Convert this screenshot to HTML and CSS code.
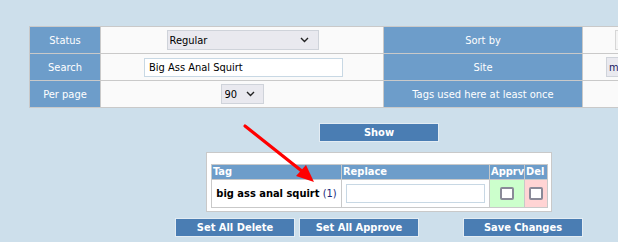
FILE: index.html
```html
<!DOCTYPE html>
<html>
<head>
<meta charset="utf-8">
<link rel="stylesheet" href="styles.css">
</head>
<body>
<div class="page">
  <table class="filters">
    <colgroup><col class="c1"><col class="c2"><col class="c3"><col class="c4"></colgroup>
    <tr>
      <th>Status</th>
      <td class="center"><div class="sel sel-status"><select><option>Regular</option></select><svg class="chev" width="9" height="6" viewBox="0 0 9 6"><path d="M1 1l3.5 3.5L8 1" fill="none" stroke="#222" stroke-width="1.4"/></svg></div></td>
      <th>Sort by</th>
      <td><div class="sel sel-sort"><select><option></option></select></div></td>
    </tr>
    <tr>
      <th>Search</th>
      <td class="center"><input class="search" type="text" value="Big Ass Anal Squirt"></td>
      <th>Site</th>
      <td><div class="sel sel-site"><select><option>m</option></select></div></td>
    </tr>
    <tr>
      <th>Per page</th>
      <td class="center"><div class="sel sel-pp"><select><option>90</option></select><svg class="chev" width="9" height="6" viewBox="0 0 9 6"><path d="M1 1l3.5 3.5L8 1" fill="none" stroke="#222" stroke-width="1.4"/></svg></div></td>
      <th>Tags used here at least once</th>
      <td></td>
    </tr>
  </table>

  <div class="show-row"><button class="btn">Show</button></div>

  <div class="tags-box">
    <table class="tags">
      <colgroup><col class="t1"><col class="t2"><col class="t3"><col class="t4"></colgroup>
      <tr class="head"><th>Tag</th><th>Replace</th><th>Apprv</th><th>Del</th></tr>
      <tr>
        <td class="tagname"><b>big ass anal squirt</b> <span class="count">(1)</span></td>
        <td><input class="replace" type="text"></td>
        <td class="apprv"><span class="cb"></span></td>
        <td class="del"><span class="cb"></span></td>
      </tr>
    </table>
  </div>

  <div class="actions">
    <button class="btn">Set All Delete</button>
    <button class="btn">Set All Approve</button>
    <button class="btn save">Save Changes</button>
  </div>

  <svg class="arrow" width="100" height="80" viewBox="0 0 100 80">
    <line x1="5" y1="6" x2="63" y2="52" stroke="#ff0000" stroke-width="3.2" stroke-linecap="round"/>
    <polygon points="74,62 56,56 66,45" fill="#ff0000"/>
  </svg>
</div>
</body>
</html>
```
FILE: styles.css
```css
html, body {
  margin: 0;
  padding: 0;
  background: #cddfeb;
  overflow: hidden;
}
body {
  font-family: "DejaVu Sans Condensed", "DejaVu Sans", Verdana, sans-serif;
  font-stretch: condensed;
  font-size: 11px;
}
.page {
  position: relative;
  padding: 26px 0 0 29px;
  width: 589px;
  height: 216px;
  overflow: hidden;
}
.filters {
  border-collapse: collapse;
  table-layout: fixed;
  width: 790px;
  border: 1px solid #c9c9c9;
}
.filters col.c1 { width: 71px; }
.filters col.c2 { width: 283px; }
.filters col.c3 { width: 199px; }
.filters col.c4 { width: 237px; }
.filters th, .filters td {
  border: 1px solid #c9c9c9;
  height: 26px;
  padding: 0;
}
.filters th {
  background: #6d9dca;
  color: #fff;
  font-weight: normal;
  text-align: center;
}
.filters td {
  background: #fafafa;
}
.center { text-align: center; }
.sel {
  position: relative;
  display: inline-block;
  vertical-align: middle;
}
.sel select {
  appearance: none;
  -webkit-appearance: none;
  font: inherit;
  color: #000;
  background: #e9e9ef;
  border: 1px solid #cfd3da;
  border-radius: 0;
  height: 20px;
  padding: 0 0 0 2px;
  margin: 0;
  outline: none;
}
.sel .chev {
  position: absolute;
  right: 10px;
  top: 7px;
  pointer-events: none;
}
.sel-status select { width: 152px; }
.sel-status { margin-left: 1px; }
.sel-pp select { width: 43px; padding-left: 3px; }
.sel-pp .chev { right: 9px; }
.sel-sort select { width: 40px; margin-left: 32px; background: #f4f4f4; border-color: #d6d6d6; }
.sel-site select { width: 40px; margin-left: 23px; color: #1a1a60; }
.search {
  font: inherit;
  width: 199px;
  height: 19px;
  box-sizing: border-box;
  border: 1px solid #c8d8e4;
  background: #fff;
  padding: 0 0 0 4px;
  margin: 0 0 0 3px;
  vertical-align: middle;
  outline: none;
}
.btn {
  font-family: inherit;
  font-stretch: condensed;
  font-size: 11px;
  font-weight: bold;
  color: #fff;
  background: #4a7db3;
  border: 1px solid #e3ecf3;
  width: 120px;
  height: 19px;
  padding: 0;
  margin: 0;
  cursor: pointer;
}
.show-row {
  margin-top: 15px;
  padding-left: 290px;
  display: flex;
}
.tags-box {
  margin-top: 10px;
  margin-left: 177px;
  width: 336px;
  background: #fff;
  border: 1px solid #c9c9c9;
  padding: 11px 4px 3px 4px;
}
.tags {
  border-collapse: collapse;
  table-layout: fixed;
  width: 336px;
  border: 1px solid #c9c9c9;
}
.tags col.t1 { width: 130px; }
.tags col.t2 { width: 148px; }
.tags col.t3 { width: 35px; }
.tags col.t4 { width: 23px; }
.tags th, .tags td {
  border: 1px solid #c9c9c9;
  padding: 0;
}
.tags .head th {
  background: #6d9dca;
  color: #fff;
  font-weight: bold;
  text-align: left;
  height: 14px;
  line-height: 14px;
  padding: 0 0 0 1px;
  font-size: 11px;
  white-space: nowrap;
}
.tags td {
  height: 27px;
  text-align: center;
}
.tagname { color: #000; white-space: nowrap; }
.count { color: #1a2a7a; }
.replace {
  font: inherit;
  width: 139px;
  height: 19px;
  box-sizing: border-box;
  border: 1px solid #c8d8e4;
  background: #fff;
  margin: 0;
  vertical-align: middle;
  outline: none;
}
.apprv { background: #ccffcc; }
.del { background: #ffd4d4; }
.cb {
  display: inline-block;
  vertical-align: middle;
  width: 10px;
  height: 9px;
  border: 2px solid #8a8a98;
  border-radius: 2px;
  background: #fff;
}
.actions {
  display: flex;
  margin-top: 6px;
  margin-left: 146px;
  gap: 4px;
}
.actions .save { margin-left: 40px; }
.arrow {
  position: absolute;
  left: 240px;
  top: 120px;
}
```
